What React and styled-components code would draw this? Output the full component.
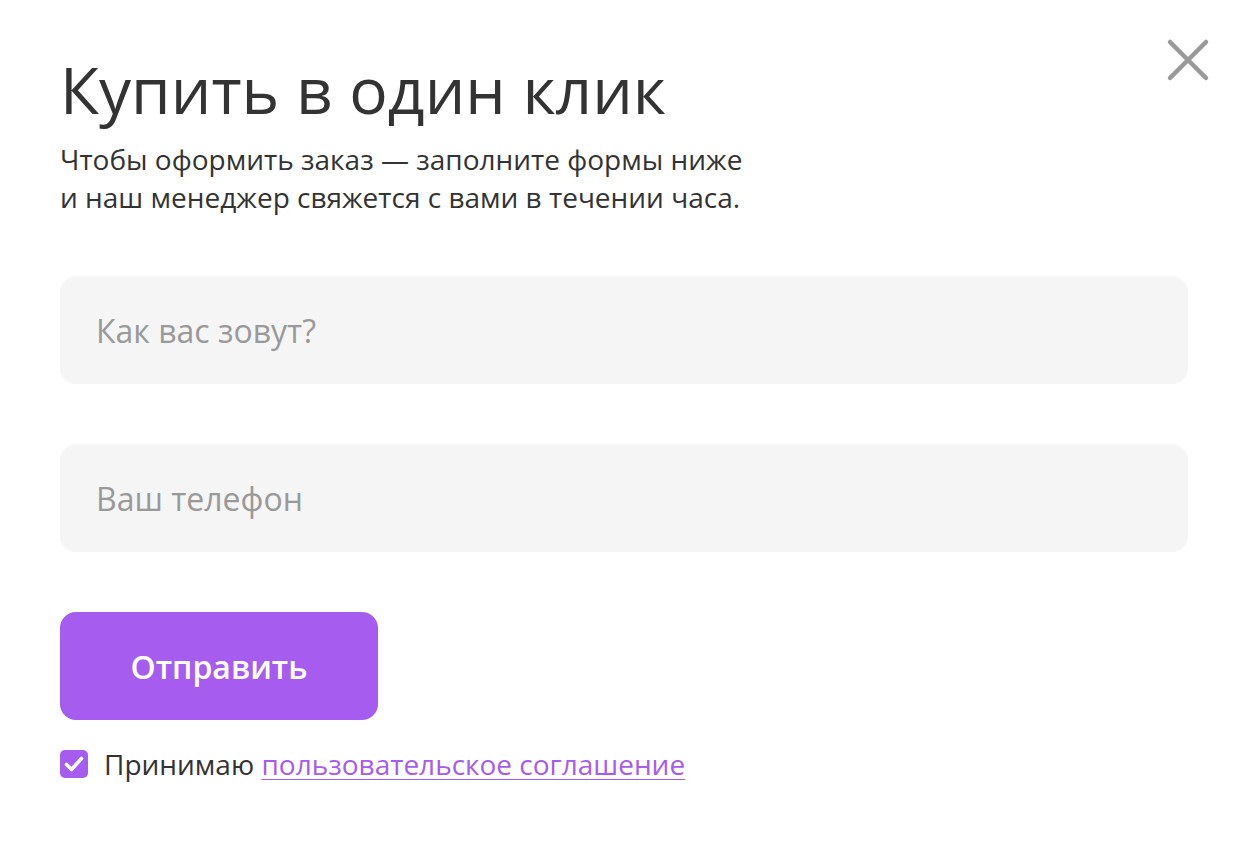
import React, { useState } from 'react';
import styled, { createGlobalStyle } from 'styled-components';

const GlobalStyle = createGlobalStyle`
  html, body {
    margin: 0;
    padding: 0;
    background: #ffffff;
  }
  * {
    box-sizing: border-box;
  }
`;

const Modal = styled.div`
  position: relative;
  width: 1248px;
  height: 842px;
  padding: 50px 60px 0 60px;
  font-family: 'Open Sans', 'Noto Sans', sans-serif;
  color: #333333;
  background: #ffffff;
`;

const CloseButton = styled.button`
  position: absolute;
  top: 38px;
  right: 38px;
  width: 44px;
  height: 44px;
  padding: 0;
  border: none;
  background: transparent;
  cursor: pointer;
  display: flex;
  align-items: center;
  justify-content: center;
`;

const Title = styled.h1`
  margin: 0;
  font-size: 64px;
  font-weight: 400;
  line-height: 80px;
  color: #333333;
`;

const Subtitle = styled.p`
  margin: 10px 0 0;
  font-size: 28px;
  line-height: 38px;
  color: #333333;
`;

const Form = styled.form`
  display: flex;
  flex-direction: column;
  align-items: flex-start;
  margin-top: 60px;
`;

const Input = styled.input`
  width: 100%;
  height: 108px;
  padding: 0 36px;
  margin-bottom: ${(p) => p.$gap || 0}px;
  border: none;
  border-radius: 16px;
  background: #f5f5f5;
  font-family: inherit;
  font-size: 32px;
  color: #333333;
  outline: none;

  &::placeholder {
    color: #999999;
  }
`;

const SubmitButton = styled.button`
  width: 318px;
  height: 108px;
  border: none;
  border-radius: 16px;
  background: #a55cef;
  color: #ffffff;
  font-family: inherit;
  font-size: 32px;
  font-weight: 600;
  cursor: pointer;
`;

const Agreement = styled.label`
  display: flex;
  align-items: center;
  gap: 16px;
  margin-top: 30px;
  font-size: 28px;
  line-height: 28px;
  color: #333333;
  cursor: pointer;
`;

const Box = styled.span`
  width: 28px;
  height: 28px;
  border-radius: 5px;
  background: ${(p) => (p.$checked ? '#a55cef' : '#f5f5f5')};
  display: flex;
  align-items: center;
  justify-content: center;
  flex-shrink: 0;
`;

const AgreementLink = styled.a`
  color: #a55cef;
  text-decoration: underline;
  text-underline-offset: 4px;
  text-decoration-thickness: 1px;
`;

export default function App() {
  const [checked, setChecked] = useState(true);

  return (
    <>
      <GlobalStyle />
      <Modal>
        <CloseButton aria-label="Закрыть">
          <svg width="44" height="44" viewBox="0 0 44 44">
            <path
              d="M4 4 L40 40 M40 4 L4 40"
              stroke="#999999"
              strokeWidth="4.5"
              strokeLinecap="round"
            />
          </svg>
        </CloseButton>
        <Title>Купить в один клик</Title>
        <Subtitle>
          Чтобы оформить заказ — заполните формы ниже
          <br />
          и наш менеджер свяжется с вами в течении часа.
        </Subtitle>
        <Form onSubmit={(e) => e.preventDefault()}>
          <Input placeholder="Как вас зовут?" $gap={60} />
          <Input placeholder="Ваш телефон" $gap={60} />
          <SubmitButton type="submit">Отправить</SubmitButton>
          <Agreement onClick={() => setChecked(!checked)}>
            <Box $checked={checked}>
              {checked && (
                <svg width="28" height="28" viewBox="0 0 28 28">
                  <path
                    d="M6.5 14.5 L11.5 19.5 L21.5 8.5"
                    fill="none"
                    stroke="#ffffff"
                    strokeWidth="3.6"
                    strokeLinecap="round"
                    strokeLinejoin="round"
                  />
                </svg>
              )}
            </Box>
            <span>
              Принимаю{' '}
              <AgreementLink href="#" onClick={(e) => e.preventDefault()}>
                пользовательское соглашение
              </AgreementLink>
            </span>
          </Agreement>
        </Form>
      </Modal>
    </>
  );
}
